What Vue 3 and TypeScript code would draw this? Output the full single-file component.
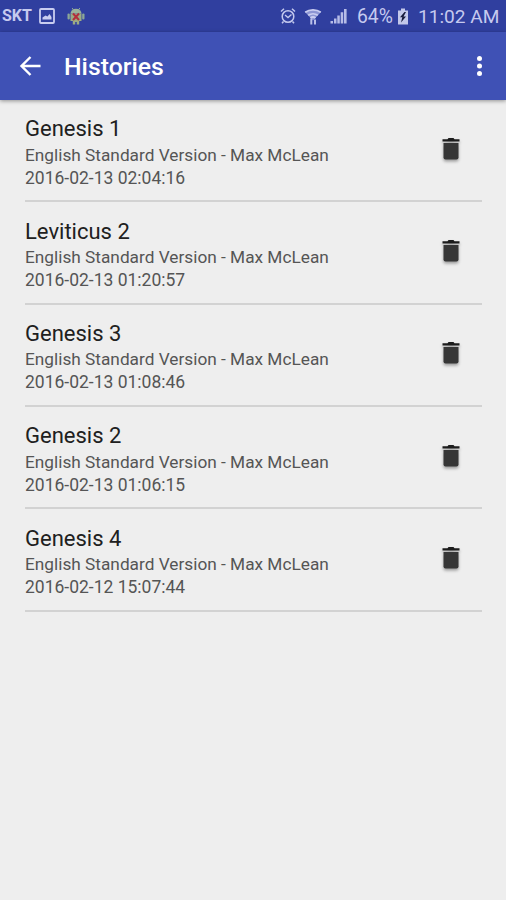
<script setup lang="ts">
interface HistoryEntry {
  chapter: string
  source: string
  playedAt: string
}

const source = 'English Standard Version - Max McLean'

const entries: HistoryEntry[] = [
  { chapter: 'Genesis 1', source, playedAt: '2016-02-13 02:04:16' },
  { chapter: 'Leviticus 2', source, playedAt: '2016-02-13 01:20:57' },
  { chapter: 'Genesis 3', source, playedAt: '2016-02-13 01:08:46' },
  { chapter: 'Genesis 2', source, playedAt: '2016-02-13 01:06:15' },
  { chapter: 'Genesis 4', source, playedAt: '2016-02-12 15:07:44' },
]
</script>

<template>
  <div class="screen">
    <div class="status">
      <span class="carrier">SKT</span>
      <svg class="picture" width="16" height="16" viewBox="0 0 16 16">
        <rect x="1" y="1" width="14" height="14" rx="1" fill="none" stroke="#c9cdf0" stroke-width="1.8" />
        <path d="M3.5 11.5V9.5l3-2 2 1 2-2.5 2 3v2.500z" fill="#c9cdf0" />
      </svg>
      <svg class="droid" width="18" height="18" viewBox="0 0 18 18">
        <path d="M5.200 1l1.500 2.500M12.800 1l-1.500 2.500" stroke="#8ca796" stroke-width="1" />
        <path d="M3.500 6.500a5.500 4.700 0 0 1 11 0z" fill="#9bb39b" />
        <rect x="0.500" y="6.500" width="2.300" height="6" rx="1.100" fill="#8ca796" />
        <rect x="15.200" y="6.500" width="2.300" height="6" rx="1.100" fill="#8ca796" />
        <path d="M3.500 6.500h11v7.500h-2.300v3.500H9.800V15H8.200v2.500H5.800V14H3.500z" fill="#9bab84" />
        <path d="M6 6.500l6 6.500M12 6.500L6 13" stroke="#b32f3c" stroke-width="2" />
      </svg>
      <span class="spacer"></span>
      <svg class="alarm" width="16" height="18" viewBox="0 0 16 18" fill="none" stroke="#c3c8ee">
        <circle cx="8" cy="9.500" r="5.800" stroke-width="1.500" />
        <path d="M1 4.500L4 1.800M15 4.500l-3-2.700M3.500 14.500L2 16.300M12.500 14.500l1.500 1.800" stroke-width="1.500" />
        <path d="M5 8l3 2.500L11.500 7.500" stroke-width="1.400" />
      </svg>
      <svg class="wifi" width="18" height="19" viewBox="0 0 18 19">
        <path d="M1.200 5.200a11.500 9 0 0 1 15.600 0L9 13.500z" fill="#8c95d3" />
        <path d="M1.200 5.200a11.500 9 0 0 1 15.600 0M4.200 8.300a7.200 6 0 0 1 9.600 0M6.500 11a4 4 0 0 1 5 0" fill="none" stroke="#c9cdf0" stroke-width="1.700" />
        <path d="M7.300 11.500v6M11 17.500v-5" fill="none" stroke="#b9bfe9" stroke-width="2" />
      </svg>
      <svg class="signal" width="17" height="16" viewBox="0 0 17 16" fill="#b6bce7">
        <path d="M0.500 13h2.500v2.500H0.500zM4 10.500h2.500v5H4zM7.300 7.500h2.500v8H7.300zM10.700 4.300h2.500v11.200h-2.500zM14 1h2.600v14.500H14z" />
      </svg>
      <span class="percent">64%</span>
      <svg class="battery" width="12" height="17" viewBox="0 0 12 17">
        <path d="M4 0.500h4v2h3v14H1v-14h3z" fill="#c3c8ea" />
        <path d="M7.500 4L3 9.300h2.300L4 14.500l5-6H6.500L9 4z" fill="#171b3c" />
      </svg>
      <span class="clock">11:02 AM</span>
    </div>

    <header class="toolbar">
      <svg class="back" width="22" height="22" viewBox="0 0 22 22" fill="none" stroke="#fff" stroke-width="2.400">
        <path d="M21.500 11H3M11.500 2L2.500 11l9 9" />
      </svg>
      <h1>Histories</h1>
      <svg class="more" width="8" height="22" viewBox="0 0 8 22" fill="#fff">
        <circle cx="4.500" cy="3.500" r="2.500" />
        <circle cx="4.500" cy="11" r="2.500" />
        <circle cx="4.500" cy="18.500" r="2.500" />
      </svg>
    </header>

    <ul class="list">
      <li v-for="entry in entries" :key="entry.playedAt" class="row">
        <div class="details">
          <div class="chapter">{{ entry.chapter }}</div>
          <div class="source">{{ entry.source }}</div>
          <div class="date">{{ entry.playedAt }}</div>
        </div>
        <svg class="trash" width="20" height="26" viewBox="0 0 20 26">
          <path d="M1.500 2.200H6.500L7.500 1h5L13.500 2.200h5v2.300h-17z" fill="#1c1c1c" />
          <path d="M2.500 6h15v14.500a2 2 0 0 1-2 2h-11a2 2 0 0 1-2-2z" fill="#363636" />
        </svg>
      </li>
    </ul>
  </div>
</template>

<style>
body {
  margin: 0;
  background: #eee;
}
</style>

<style scoped>
.screen {
  width: 506px;
  height: 900px;
  overflow: hidden;
  background: #eee;
  font-family: Roboto, sans-serif;
}
.status {
  display: flex;
  align-items: center;
  box-sizing: border-box;
  height: 32px;
  padding: 0 7px 0 2px;
  background: #303f9f;
  color: #c6caef;
  white-space: nowrap;
}
.status svg,
.status span {
  flex-shrink: 0;
}
.carrier {
  width: 37px;
  font-size: 16px;
  font-weight: 700;
  line-height: 32px;
}
.droid {
  margin-left: 12px;
}
.status .spacer {
  flex: 1;
}
.wifi {
  margin-left: 8px;
}
.signal {
  margin-left: 8px;
}
.percent {
  width: 39px;
  margin: 2px 0 0 10px;
  font-size: 19.300px;
  line-height: 28px;
}
.battery {
  margin-left: 1px;
}
.clock {
  width: 81px;
  margin: 2px 0 0 9px;
  font-size: 19.100px;
  line-height: 28px;
}
.toolbar {
  display: flex;
  align-items: center;
  box-sizing: border-box;
  height: 68px;
  padding: 0 23px 0 19px;
  background: #3f51b5;
  box-shadow: 0 1px 4px rgba(0, 0, 0, 0.4);
}
h1 {
  flex: 1;
  margin: 2px 0 0 23px;
  color: #fff;
  font-size: 24.800px;
  font-weight: 500;
  line-height: 32px;
}
.list {
  margin: 0;
  padding: 0 24px 0 25px;
  list-style: none;
}
.row {
  display: flex;
  justify-content: space-between;
  align-items: flex-start;
  box-sizing: border-box;
  height: 102.350px;
  padding: 15.200px 21px 0 0;
  border-bottom: 2px solid #d2d2d2;
}
.details {
  white-space: nowrap;
}
.chapter {
  margin-bottom: 0.400px;
  color: #202020;
  font-size: 22px;
  line-height: 28px;
}
.source,
.date {
  color: #555;
  font-size: 17.260px;
  line-height: 23px;
}
.date {
  font-size: 17.500px;
}
.trash {
  margin-top: 21.400px;
  filter: drop-shadow(0 2px 1.500px rgba(0, 0, 0, 0.35));
}
</style>
